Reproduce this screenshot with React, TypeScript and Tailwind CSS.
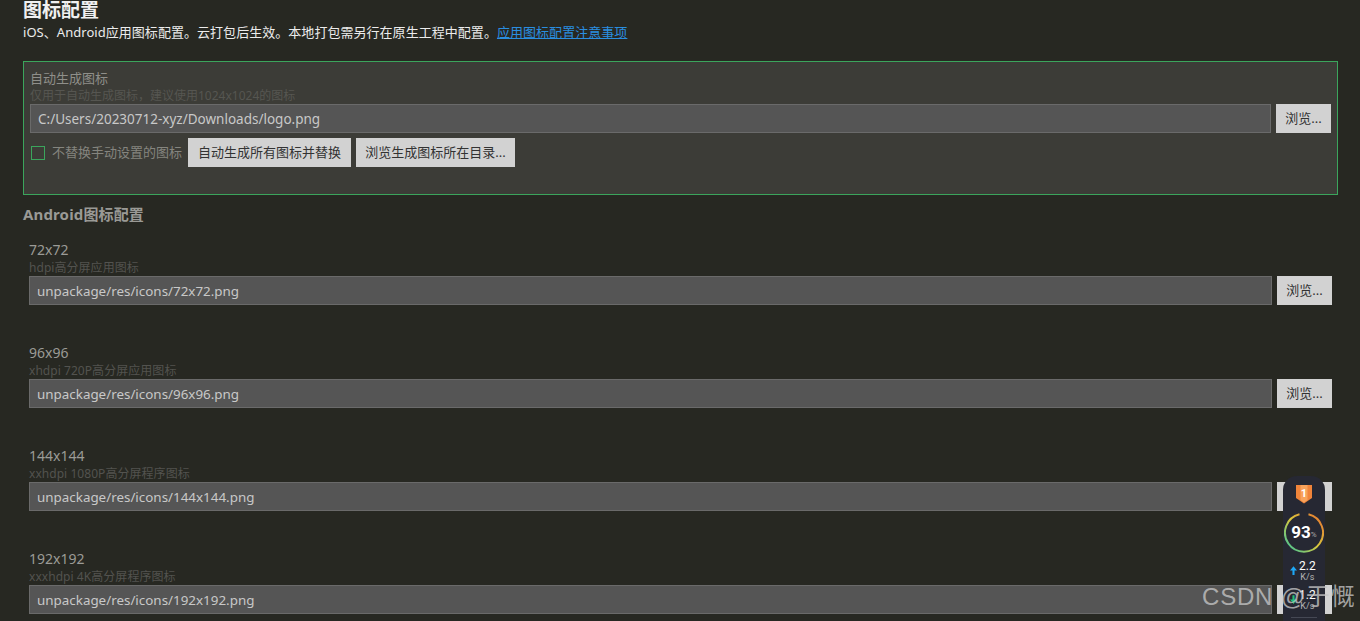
const FONT = "font-['Noto_Sans','Noto_Sans_CJK_SC',sans-serif]";

const icons = [
  { title: '72x72', desc: 'hdpi高分屏应用图标', path: 'unpackage/res/icons/72x72.png' },
  { title: '96x96', desc: 'xhdpi 720P高分屏应用图标', path: 'unpackage/res/icons/96x96.png' },
  { title: '144x144', desc: 'xxhdpi 1080P高分屏程序图标', path: 'unpackage/res/icons/144x144.png' },
  { title: '192x192', desc: 'xxxhdpi 4K高分屏程序图标', path: 'unpackage/res/icons/192x192.png' },
];

function Browse({ label = '浏览...', width = 'w-[55px]' }: { label?: string; width?: string }) {
  return (
    <button className={`h-[29px] shrink-0 whitespace-nowrap bg-[#d2d2d2] text-center text-[13px] leading-[29px] text-[#333] ${width}`}>
      {label}
    </button>
  );
}

function PathInput({ value, size = 'text-[13.4px]' }: { value: string; size?: string }) {
  return (
    <div className={`h-[29px] min-w-0 flex-1 border border-[#6a6a6a] bg-[#555555] pl-[7px] leading-[28px] text-[#c8c8c8] ${size}`}>
      {value}
    </div>
  );
}

function IconRow({ title, desc, path }: { title: string; desc: string; path: string }) {
  return (
    <div className="h-[103px] pl-[6px] pr-[6px]">
      <div className="pt-[2px] text-[14px] leading-[18px] text-[#9b9b96]">{title}</div>
      <div className="text-[12px] leading-[17px] tracking-[0.05px] text-[#53534f]">{desc}</div>
      <div className="flex gap-[5px]">
        <PathInput value={path} />
        <Browse />
      </div>
    </div>
  );
}

function SpeedWidget() {
  return (
    <div className="absolute left-[1283px] top-[476px] flex h-[160px] w-[42px] flex-col items-center rounded-t-[14px] bg-[#262833] text-white">
      <svg width="16" height="19" viewBox="0 0 16 19" className="mt-[9px]">
        <path d="M0 0h16v13l-8 5.500-8-5.500z" fill="#f0843a" />
        <path d="M4.500 0h7v15l-3.500 2.500-3.500-2.500z" fill="#f8a35c" />
        <text x="8" y="11.500" textAnchor="middle" fontSize="11" fontWeight="700" fill="#fff" fontFamily="Roboto, sans-serif">1</text>
      </svg>
      <div className="relative mt-[9px] h-[40px] w-[40px]">
        <svg width="40" height="40" viewBox="0 0 40 40" className="absolute inset-0">
          <defs>
            <linearGradient id="ring" x1="1" y1="0" x2="0" y2="1">
              <stop offset="0" stopColor="#e8702f" />
              <stop offset="0.5" stopColor="#d9c83c" />
              <stop offset="1" stopColor="#2fc4a2" />
            </linearGradient>
          </defs>
          <path d="M24.500 1.300A19 19 0 1 1 15.500 1.300" fill="none" stroke="url(#ring)" strokeWidth="2" />
        </svg>
        <div className="absolute inset-0 flex items-center justify-center font-['Roboto',sans-serif] text-[17px] font-bold">
          93<span className="mt-[4px] text-[8px] font-normal text-[#aaa]">%</span>
        </div>
      </div>
      <div className="mt-[8px] flex w-full items-start pl-[7px]">
        <svg width="7" height="9" viewBox="0 0 8 10" className="mt-[5px] mr-[2px]">
          <path d="M4 0l4 5H5.200v5H2.800V5H0z" fill="#1ea7f5" />
        </svg>
        <div className="text-center leading-none">
          <div className="font-['Roboto',sans-serif] text-[12px] leading-[11px]">2.2</div>
          <div className="font-['Roboto',sans-serif] text-[9px] leading-[10px] text-[#b5b5b5]">K/s</div>
        </div>
      </div>
      <div className="mt-[8px] flex w-full items-start pl-[7px]">
        <svg width="7" height="9" viewBox="0 0 8 10" className="mt-[5px] mr-[2px]">
          <path d="M4 10l4-5H5.200V0H2.800v5H0z" fill="#22c07a" />
        </svg>
        <div className="text-center leading-none">
          <div className="font-['Roboto',sans-serif] text-[12px] leading-[11px]">1.2</div>
          <div className="font-['Roboto',sans-serif] text-[9px] leading-[10px] text-[#b5b5b5]">K/s</div>
        </div>
      </div>
      <div className="mt-[6px] h-px w-[26px] bg-[#454854]" />
    </div>
  );
}

export default function App() {
  return (
    <div className={`relative h-[621px] w-[1360px] overflow-hidden bg-[#272822] ${FONT}`}>
      <div className="pl-[23px] pr-[22px]">
        <h1 className="h-[22px] text-[19px] font-bold leading-[20px] text-[#f0f0f0]">图标配置</h1>
        <p className="mt-[1px] h-[38px] text-[13px] leading-[18px] tracking-[0.04px] text-[#ececec]">
          iOS、Android应用图标配置。云打包后生效。本地打包需另行在原生工程中配置。
          <a className="text-[#2a8ee0] underline">应用图标配置注意事项</a>
        </p>

        <section className="h-[134px] border border-[#3ba55c] bg-[#3c3c37] px-[6px] pt-[7px]">
          <div className="text-[13px] leading-[18px] text-[#8f8f8a]">自动生成图标</div>
          <div className="text-[12px] leading-[17px] text-[#565651]">仅用于自动生成图标，建议使用1024x1024的图标</div>
          <div className="flex gap-[5px]">
            <PathInput value="C:/Users/20230712-xyz/Downloads/logo.png" size="text-[13.5px]" />
            <Browse />
          </div>
          <div className="mt-[5px] flex items-center">
            <span className="ml-[1px] h-[14px] w-[14px] border border-[#3ba55c]" />
            <span className="ml-[7px] w-[136px] whitespace-nowrap text-[13px] text-[#85857f]">不替换手动设置的图标</span>
            <div className="flex gap-[5px]">
              <Browse label="自动生成所有图标并替换" width="w-[163px]" />
              <Browse label="浏览生成图标所在目录..." width="w-[159px]" />
            </div>
          </div>
        </section>

        <h2 className="mt-[10px] h-[34px] text-[15px] font-bold leading-[18px] tracking-[0.15px] text-[#9a9a96]">Android图标配置</h2>

        {icons.map((icon) => (
          <IconRow key={icon.title} {...icon} />
        ))}
      </div>

      <SpeedWidget />
      <div className="absolute left-[1202px] top-[582px] font-['Liberation_Sans','Noto_Sans_CJK_SC',sans-serif] text-[24px] leading-[30px] tracking-[0.8px] text-[#c4c4c4]/80">
        CSDN @于慨
      </div>
    </div>
  );
}
